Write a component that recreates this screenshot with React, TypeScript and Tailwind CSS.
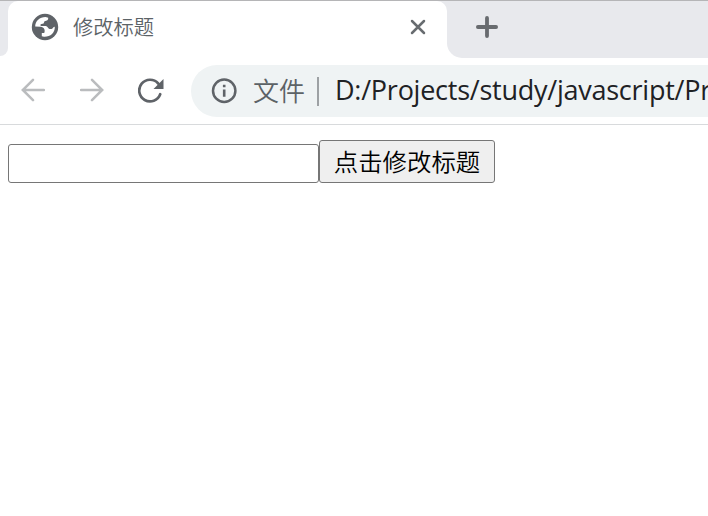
const GlobeIcon = () => (
  <svg width="28" height="28" viewBox="0 0 28 28" className="shrink-0">
    <circle cx="14" cy="14" r="13.2" fill="#5f6368" />
    <path
      d="M4.2 13.6C4.2 8 8.7 4 14.6 4L17.2 4.8C17.5 7 16 8 13.5 8.2L12.6 10.4L9.6 11.2V13H14.4C16.6 13 16.8 15.6 18.6 16H20.6C22 15.6 22 14 23.8 13.8C24 20 19.5 24 13 23.8L10.8 23.2V20H13.2C14.6 17.4 13 13.9 9.6 13.8Z"
      fill="#fff"
    />
  </svg>
);

const CloseIcon = () => (
  <svg width="16" height="16" viewBox="0 0 16 16" fill="none" stroke="#686c70" strokeWidth="2.5" strokeLinecap="round">
    <path d="M2 2 14 14M14 2 2 14" />
  </svg>
);

const PlusIcon = () => (
  <svg width="22" height="22" viewBox="0 0 22 22" fill="none" stroke="#686b6f" strokeWidth="3.8" strokeLinecap="round">
    <path d="M11 1.9V20.1M1.9 11H20.1" />
  </svg>
);

const ArrowIcon = ({ className = "" }: { className?: string }) => (
  <svg width="24" height="24" viewBox="0 0 24 24" fill="none" stroke="#babcbe" strokeWidth="2.5" strokeLinecap="round" className={className}>
    <path d="M23 12H2M12 1.8 1.8 12 12 22.2" />
  </svg>
);

const ReloadIcon = () => (
  <svg width="26" height="26" viewBox="0 0 26 26" fill="none">
    <path d="M22.2 16.2A10.8 10.8 0 1 1 20.2 5.5L22 7.7" stroke="#5f6368" strokeWidth="2.7" strokeLinecap="round" />
    <path d="M25.5 1V11H15.5Z" fill="#5f6368" />
  </svg>
);

const InfoIcon = () => (
  <svg width="26" height="26" viewBox="0 0 26 26" fill="none" className="shrink-0">
    <circle cx="13.2" cy="12.8" r="11.2" stroke="#5f6368" strokeWidth="2.5" />
    <path d="M13.2 11.4V18.8" stroke="#5f6368" strokeWidth="2.6" />
    <path d="M13.2 6.7V9.3" stroke="#5f6368" strokeWidth="2.6" />
  </svg>
);

export default function App() {
  return (
    <div className="h-[516px] w-[708px] overflow-hidden bg-white font-['Noto_Sans_CJK_SC',sans-serif]">
      <div className="flex h-[58px] border-t border-[#b5b5b7] bg-white">
        <div className="w-2 bg-white">
          <div className="h-[55px] rounded-br-[10px] bg-[#e8e9ed]" />
        </div>
        <div className="flex w-[439px] bg-[#e8e9ed]">
          <div className="flex h-[57px] w-full items-start rounded-t-[10px] bg-white pl-[23px]">
            <div className="mt-3">
              <GlobeIcon />
            </div>
            <span className="mt-2.5 ml-[14px] text-[20.3px] leading-[30px] font-[350] text-[#5c6367]">修改标题</span>
            <div className="mt-[18px] mr-[21px] ml-auto">
              <CloseIcon />
            </div>
          </div>
        </div>
        <div className="flex-1 rounded-bl-[15px] bg-[#e8e9ed] pt-[15px] pl-[29px]">
          <PlusIcon />
        </div>
      </div>
      <div className="flex h-[67px] items-center border-b border-[#d8dadc] bg-white pl-[21px]">
        <div className="flex w-[170px] shrink-0 items-center pb-0.5">
          <ArrowIcon />
          <ArrowIcon className="ml-[35px] rotate-180" />
          <div className="ml-[34px] pt-px">
            <ReloadIcon />
          </div>
        </div>
        <div className="flex h-[52px] min-w-0 flex-1 items-center overflow-hidden rounded-l-full bg-[#eff3f4] pl-5 whitespace-nowrap">
          <InfoIcon />
          <span className="ml-4 pb-0.5 text-[26px] leading-[36px] font-[350] text-[#5c6266]">文件</span>
          <div className="ml-3 h-[29px] w-0.5 shrink-0 bg-[#9da1a4]" />
          <span className="ml-4 pb-0.5 font-['Open_Sans',sans-serif] text-[27px] leading-[36px] tracking-[-0.25px] text-[#202124]">
            D:/Projects/study/javascript/Pr
          </span>
        </div>
      </div>
      <div className="flex items-end pt-[15px] pl-2">
        <input
          aria-label="标题"
          className="h-[39px] w-[311px] rounded-[3px] border border-[#767676] bg-white px-1 text-2xl outline-none"
        />
        <button className="flex h-[43px] w-[176px] items-center justify-center rounded-[3px] border border-[#767676] bg-[#efefef] text-[24.4px] leading-none font-[350] whitespace-nowrap text-black">
          点击修改标题
        </button>
      </div>
    </div>
  );
}
